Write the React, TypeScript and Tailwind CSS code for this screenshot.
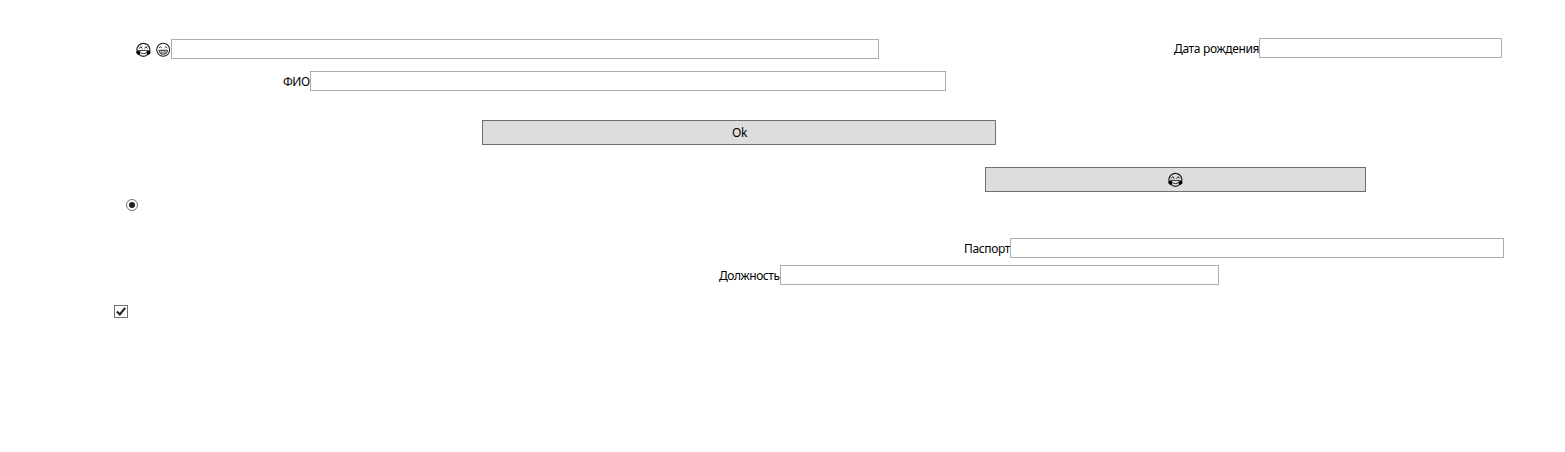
import React from 'react';

function JoyFace() {
  return (
    <svg width="16" height="16" viewBox="0 0 16 16" fill="none" className="block shrink-0" role="img">
      <circle cx="8.4" cy="7.8" r="6.5" stroke="#222" strokeWidth="1.2" />
      <path d="M4.4 6.5 5.8 4.6 7.2 6.5M9.6 6.5 11 4.6l1.4 1.9" stroke="#222" strokeWidth="1" />
      <path d="M4.6 8.4h7.6c0 2.2-1.4 3.2-3.8 3.2s-3.8-1-3.8-3.2Z" stroke="#333" strokeWidth="1" />
      <path d="M4.3 8.3C2.4 8.4 1.2 9.3 1.2 10.6c.3 1.6 2 2.6 3.7 1.8.5-.9 0-2.5-.6-4.1ZM12.5 8.3c1.9.1 3.1 1 3.1 2.3-.3 1.6-2 2.6-3.7 1.8-.5-.9 0-2.5.6-4.1Z" fill="#000" />
    </svg>
  );
}

function GrinFace() {
  return (
    <svg width="16" height="16" viewBox="0 0 16 16" fill="none" className="block shrink-0" role="img">
      <circle cx="8.2" cy="7.8" r="6.5" stroke="#222" strokeWidth="1.1" />
      <path d="M4 6 5.5 4.7 7 6M9.4 6l1.5-1.3L12.4 6" stroke="#333" strokeWidth=".9" />
      <path d="M4 8.3h8.4c0 2.5-1.7 3.9-4.2 3.9S4 10.8 4 8.3Z" stroke="#222" strokeWidth="1" />
      <path d="M4.4 10.2H12M6.7 8.5v3.4M9.7 8.5v3.4" stroke="#555" strokeWidth=".7" />
    </svg>
  );
}

const field = 'h-5 shrink-0 border border-[#abadb3] bg-white px-1 text-xs outline-none';
const button = 'flex h-[25px] items-center justify-center border border-[#707070] bg-[#dddddd]';
const label = 'shrink-0 whitespace-nowrap pt-px leading-5';

export default function App() {
  return (
    <div className="h-[452px] w-[1565px] overflow-hidden bg-white pt-[38px] font-['Noto_Sans',sans-serif] text-xs text-black">
      <div className="flex h-[33px] items-start">
        <div className="ml-[135px] mt-px flex w-[744px] items-start">
          <div className="flex w-9 shrink-0 gap-1 pt-[3px]">
            <JoyFace />
            <GrinFace />
          </div>
          <input className={`${field} w-[708px]`} />
        </div>
        <label className="ml-[295px] flex items-start">
          <span className={`${label} w-[85px] tracking-[-0.34px]`}>Дата рождения</span>
          <input className={`${field} w-[243px]`} />
        </label>
      </div>
      <label className="ml-[283px] flex h-[49px] items-start">
        <span className={`${label} w-[27px] tracking-[-0.5px]`}>ФИО</span>
        <input className={`${field} w-[636px]`} />
      </label>
      <button className={`${button} ml-[482px] w-[514px] pl-px tracking-[-0.3px]`}>Ok</button>
      <button className={`${button} ml-[985px] mt-[22px] w-[381px] pr-px`}>
        <JoyFace />
      </button>
      <div className="ml-[126px] mt-[7px] flex h-3 w-3 items-center justify-center rounded-full border border-[#707070]">
        <span className="h-1.5 w-1.5 rounded-full bg-[#212121]" />
      </div>
      <label className="ml-[964px] mt-[27px] flex h-[27px] items-start">
        <span className={`${label} w-[46px] tracking-[-0.36px]`}>Паспорт</span>
        <input className={`${field} w-[494px]`} />
      </label>
      <label className="ml-[718px] flex h-10 items-start">
        <span className={`${label} w-[62px] pl-px tracking-[-0.45px]`}>Должность</span>
        <input className={`${field} w-[439px]`} />
      </label>
      <svg width="14" height="14" viewBox="0 0 14 14" className="ml-[114px] block">
        <rect x=".5" y=".5" width="13" height="12" fill="#fff" stroke="#707070" />
        <path d="M3 6.6 5.8 9.5 11.2 2.8" fill="none" stroke="#212121" strokeWidth="2.1" />
      </svg>
    </div>
  );
}
